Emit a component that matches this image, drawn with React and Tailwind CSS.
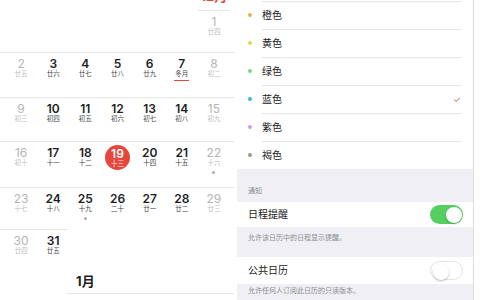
import React from 'react'

const FONT = { fontFamily: '"Inter", "Noto Sans CJK SC", sans-serif' }

// Dec 2018, week starts on Sunday
const weeks = [
  { h: 'h-[42px]', days: [null, null, null, null, null, null, [1, '廿四']] },
  { h: 'h-[45px]', days: [[2, '廿五'], [3, '廿六'], [4, '廿七'], [5, '廿八'], [6, '廿九'], [7, '冬月', 'mark'], [8, '初二']] },
  { h: 'h-[44px]', days: [[9, '初三'], [10, '初四'], [11, '初五'], [12, '初六'], [13, '初七'], [14, '初八'], [15, '初九']] },
  { h: 'h-[46px]', days: [[16, '初十'], [17, '十一'], [18, '十二'], [19, '十三', 'today'], [20, '十四'], [21, '十五'], [22, '十六', 'dot']] },
  { h: 'h-[42px]', days: [[23, '十七'], [24, '十八'], [25, '十九', 'dot'], [26, '二十'], [27, '廿一'], [28, '廿二'], [29, '廿三']] },
]

const colors = [
  { name: '橙色', dot: 'bg-[#e2b24c]' },
  { name: '黄色', dot: 'bg-[#e3d65a]' },
  { name: '绿色', dot: 'bg-[#7fd389]' },
  { name: '蓝色', dot: 'bg-[#3bbfc2]', checked: true },
  { name: '紫色', dot: 'bg-[#c9a0dc]' },
  { name: '褐色', dot: 'bg-[#a39585]' },
]

function DayCell({ day, col, topLine }) {
  if (!day) return <div />
  const [n, lunar, flag] = day
  const weekend = col === 0 || col === 6
  if (flag === 'today') {
    return (
      <div className="flex justify-center pt-[3px]">
        <div className="w-[25px] h-[25px] rounded-full bg-[#e5473c] flex flex-col items-center justify-center">
          <span className="text-[12px] leading-[12px] font-semibold text-white">{n}</span>
          <span className="text-[6.5px] leading-[8px] text-white/90">{lunar}</span>
        </div>
      </div>
    )
  }
  return (
    <div className={`flex flex-col items-center pt-[5px] ${topLine ? 'border-t border-[#e6e6e6]' : ''}`}>
      <span className={`text-[12px] leading-[12px] ${weekend ? 'text-[#b4b4b4] font-normal' : 'text-[#1e1e1e] font-semibold'}`}>{n}</span>
      <span className={`text-[6.5px] leading-[9px] ${weekend ? 'text-[#bdbdbd]' : 'text-[#444]'}`}>{lunar}</span>
      {flag === 'mark' && <div className="w-[15px] h-[1px] bg-[#e5473c] mt-[1px]" />}
      {flag === 'dot' && <div className="w-[3px] h-[3px] rounded-full bg-[#b0b0b0] mt-[3px]" />}
    </div>
  )
}

function Toggle({ on }) {
  return (
    <div className={`w-[33px] h-[19px] rounded-full p-[1.5px] flex ${on ? 'bg-[#55cf5f] justify-end' : 'bg-white border border-[#e3e3e3] justify-start'}`}>
      <div className="w-[16px] h-[16px] rounded-full bg-white shadow-[0_1px_2px_rgba(0,0,0,0.25)]" />
    </div>
  )
}

export default function App() {
  return (
    <div className="w-[480px] h-[300px] overflow-hidden flex bg-white" style={FONT}>
      {/* calendar */}
      <div className="w-[237px] shrink-0 pr-[3px]">
        {/* month label, cut at top */}
        <div className="h-[10px] pl-[5px] overflow-hidden">
          <div className="w-[225px] grid grid-cols-7">
            <div className="col-start-7 flex justify-center">
              <span className="block text-[13px] leading-[13px] font-bold text-[#e5473c] -mt-[10px]">12月</span>
            </div>
          </div>
        </div>

        {weeks.map((w, i) => (
          <div key={i} className={`${w.h} pl-[5px] ${i > 0 ? 'border-t border-[#e6e6e6]' : ''}`}>
            <div className="w-[225px] grid grid-cols-7">
              {w.days.map((d, c) => (
                <DayCell key={c} day={d} col={c} topLine={i === 0 && d} />
              ))}
            </div>
          </div>
        ))}

        {/* last week */}
        <div className="w-[68px] border-t border-[#e6e6e6]" />
        <div className="h-[40px] pl-[5px]">
          <div className="w-[225px] grid grid-cols-7">
            <DayCell day={[30, '廿四']} col={0} />
            <DayCell day={[31, '廿五']} col={1} />
          </div>
        </div>

        {/* January */}
        <div className="h-[23px] pl-[5px]">
          <div className="w-[225px] grid grid-cols-7">
            <div className="col-start-3 flex justify-center pt-[3px]">
              <span className="text-[13px] leading-[16px] font-bold text-[#1e1e1e]">1月</span>
            </div>
          </div>
        </div>
        <div className="ml-[67px] border-t border-[#e6e6e6]" />
        <div className="pl-[5px]">
          <div className="w-[225px] grid grid-cols-7 pt-[5px]">
            {[null, null, 1, 2, 3, 4, 5].map((n, c) => (
              <div key={c} className="flex justify-center">
                {n && <span className={`text-[12px] leading-[12px] ${c === 6 ? 'text-[#b4b4b4]' : 'text-[#1e1e1e] font-semibold'}`}>{n}</span>}
              </div>
            ))}
          </div>
        </div>
      </div>

      {/* settings */}
      <div className="w-[237px] shrink-0 flex flex-col bg-[#efeff4] border-r border-[#dcdcdc]">
        <div className="bg-white pt-[1px]">
          {colors.map((c) => (
            <div key={c.name} className="h-[28px] flex items-center pl-[11px] pr-[12px]">
              <div className={`w-[4px] h-[4px] rounded-full ${c.dot}`} />
              <div className="flex-1 h-full ml-[10px] border-t border-[#e6e6e6] flex items-center justify-between">
                <span className="text-[10px] text-[#222]">{c.name}</span>
                {c.checked && <span className="text-[9px] text-[#d4646a]">✓</span>}
              </div>
            </div>
          ))}
        </div>
        <div className="h-[33px] flex items-end pl-[11px] pb-[7px]">
          <span className="text-[7px] leading-[8px] text-[#8e8e93]">通知</span>
        </div>
        <div className="h-[25px] bg-white flex items-center justify-between pl-[11px] pr-[10px]">
          <span className="text-[10px] text-[#222]">日程提醒</span>
          <Toggle on />
        </div>
        <div className="h-[30px] pl-[11px] pt-[7px]">
          <span className="block text-[7px] leading-[8px] text-[#8e8e93]">允许该日历中的日程显示提醒。</span>
        </div>
        <div className="h-[27px] bg-white flex items-center justify-between pl-[11px] pr-[10px]">
          <span className="text-[10px] text-[#222]">公共日历</span>
          <Toggle />
        </div>
        <div className="pl-[11px] pt-[3px]">
          <span className="block text-[7px] leading-[8px] text-[#8e8e93]">允许任何人订阅此日历的只读版本。</span>
        </div>
      </div>
      <div className="flex-1 bg-white" />
    </div>
  )
}
